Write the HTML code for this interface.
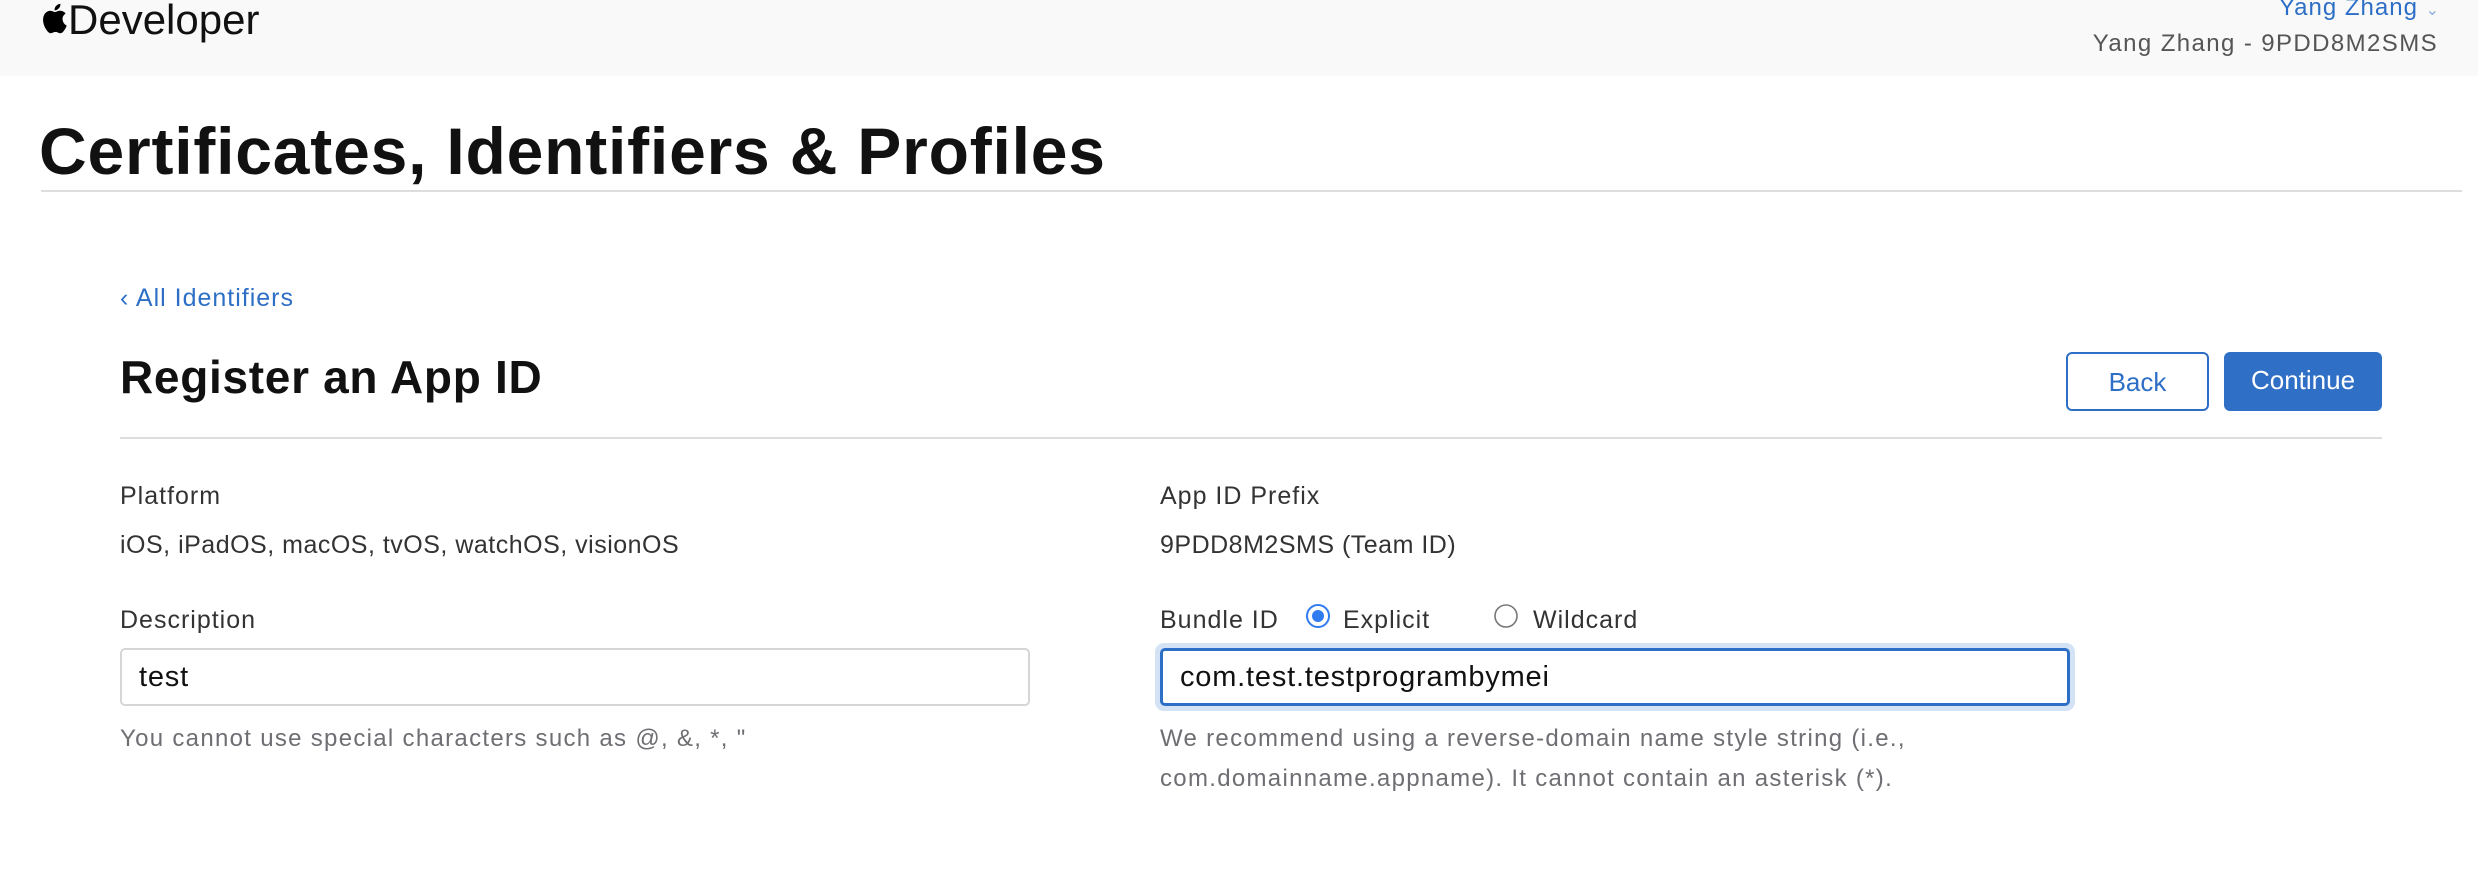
<!DOCTYPE html>
<html><head><meta charset="utf-8"><style>
*{margin:0;padding:0;box-sizing:border-box}
body{width:2478px;height:870px;background:#fff;font-family:"Liberation Sans",sans-serif;position:relative;overflow:hidden;color:#1d1d1f}
.a{position:absolute;white-space:nowrap}
.hdr{position:absolute;left:0;top:0;width:2478px;height:76px;background:#f9f9f9}
.lbl{font-size:25px;color:#333;line-height:1;letter-spacing:1px}
.val{font-size:25px;color:#333;line-height:1;letter-spacing:.5px}
.hint{font-size:24px;color:#6e6e73;line-height:1;letter-spacing:1.3px}
.inp{position:absolute;height:58px;border:2px solid #d6d6d6;border-radius:5px;background:#fff;font-size:29px;color:#111;padding-left:17px;line-height:54px}
.btn{position:absolute;top:352px;height:59px;border-radius:6px;font-size:26px;text-align:center;line-height:57px}
</style></head><body>
<div class="hdr"></div>
<svg class="a" style="left:41px;top:2px" width="26" height="32" viewBox="0 0 26 32"><path fill="#000" d="M21.5 17c0-3.6 3-5.3 3.1-5.4-1.7-2.5-4.3-2.8-5.2-2.8-2.2-.2-4.3 1.3-5.4 1.3-1.1 0-2.8-1.300-4.7-1.3C6.9 8.9 4.6 10.3 3.3 12.6c-2.6 4.5-.7 11.2 1.900 14.9 1.2 1.8 2.7 3.8 4.6 3.7 1.8-.1 2.5-1.2 4.8-1.2 2.2 0 2.8 1.2 4.7 1.2 2 0 3.2-1.8 4.4-3.6 1.4-2 2-4 2-4.1-.1 0-3.9-1.5-4.2-6.5zM17.9 6.3c1-1.2 1.7-2.9 1.5-4.6-1.5.1-3.2 1-4.3 2.2-.9 1.1-1.8 2.8-1.5 4.5 1.6.1 3.3-.9 4.3-2.1z"/></svg>
<div class="a" style="left:68px;top:-4px;font-size:42px;color:#111;letter-spacing:0px">Developer</div>
<div class="a" style="right:38px;top:-6px;font-size:24px;color:#2d6fc6;letter-spacing:1px">Yang Zhang <span style="font-size:16px;color:#8aaee0">&#8964;</span></div>
<div class="a" style="right:40px;top:30px;font-size:24px;color:#555;letter-spacing:1.4px">Yang Zhang - 9PDD8M2SMS</div>
<div class="a" style="left:39px;top:113px;font-size:66px;font-weight:bold;color:#111;letter-spacing:.8px">Certificates, Identifiers &amp; Profiles</div>
<div class="a" style="left:41px;top:190px;width:2421px;height:2px;background:#ddd"></div>
<div class="a" style="left:120px;top:284px;font-size:25px;color:#2d6fc6;letter-spacing:1px">‹ All Identifiers</div>
<div class="a" style="left:120px;top:350px;font-size:46px;font-weight:bold;color:#111;letter-spacing:.7px">Register an App ID</div>
<div class="btn" style="left:2066px;width:143px;border:2px solid #2d6fc6;color:#2d6fc6;background:#fff">Back</div>
<div class="btn" style="left:2224px;width:158px;background:#2f6fc5;color:#fff">Continue</div>
<div class="a" style="left:120px;top:437px;width:2262px;height:2px;background:#ddd"></div>
<div class="a lbl" style="left:120px;top:484px">Platform</div>
<div class="a val" style="left:120px;top:533px">iOS, iPadOS, macOS, tvOS, watchOS, visionOS</div>
<div class="a lbl" style="left:1160px;top:484px">App ID Prefix</div>
<div class="a val" style="left:1160px;top:533px">9PDD8M2SMS (Team ID)</div>
<div class="a lbl" style="left:120px;top:608px">Description</div>
<div class="inp" style="left:120px;top:648px;width:910px;letter-spacing:.8px">test</div>
<div class="a hint" style="left:120px;top:727px">You cannot use special characters such as @, &amp;, *, "</div>
<div class="a lbl" style="left:1160px;top:608px">Bundle ID</div>
<svg class="a" style="left:1305px;top:603px" width="26" height="26"><circle cx="13" cy="13" r="11" fill="#fff" stroke="#2f7bef" stroke-width="2"/><circle cx="13" cy="13" r="6" fill="#2f7bef"/></svg>
<div class="a lbl" style="left:1343px;top:608px">Explicit</div>
<svg class="a" style="left:1493px;top:603px" width="26" height="26"><circle cx="13" cy="13" r="11" fill="#fff" stroke="#777" stroke-width="1.6"/></svg>
<div class="a lbl" style="left:1533px;top:608px">Wildcard</div>
<div class="a" style="left:1155px;top:643px;width:920px;height:68px;border-radius:9px;background:#d3e2f5"></div>
<div class="inp" style="left:1160px;top:648px;width:910px;border:3px solid #2d6fc6;padding-left:17px;line-height:52px;letter-spacing:.8px">com.test.testprogrambymei</div>
<div class="a hint" style="left:1160px;top:727px">We recommend using a reverse-domain name style string (i.e.,</div>
<div class="a hint" style="left:1160px;top:767px">com.domainname.appname). It cannot contain an asterisk (*).</div>
</body></html>
